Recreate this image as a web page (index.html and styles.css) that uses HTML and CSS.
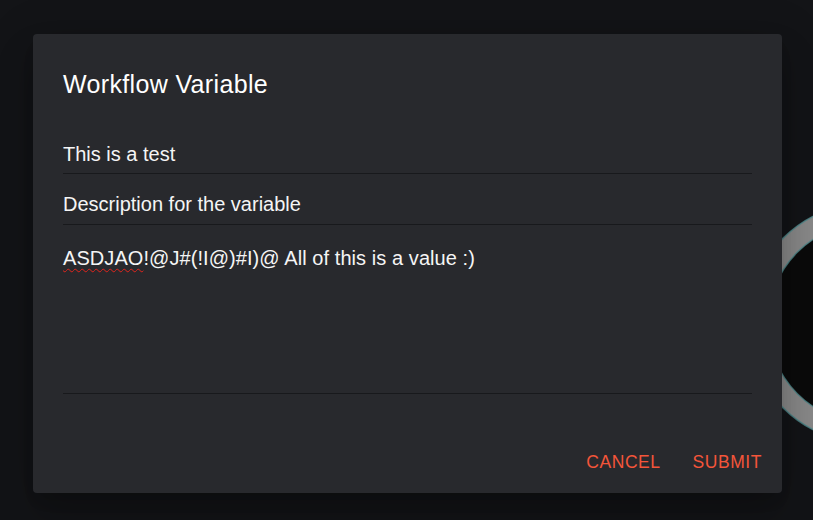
FILE: index.html
```html
<!DOCTYPE html>
<html lang="en">
<head>
<meta charset="utf-8">
<title>Workflow Variable</title>
<link rel="stylesheet" href="styles.css">
</head>
<body>
<svg class="ring" width="75" height="260" viewBox="0 0 75 260" aria-hidden="true">
  <circle cx="130" cy="130" r="110" fill="#0b0b0b" stroke="#8a8a8a" stroke-width="20"/>
  <circle cx="130" cy="130" r="120" fill="none" stroke="#4f8a8c" stroke-width="1.5" opacity="0.8"/>
  <circle cx="130" cy="130" r="100" fill="none" stroke="#4f8a8c" stroke-width="1.5" opacity="0.8"/>
</svg>
<div class="dialog" role="dialog">
  <h2 class="title">Workflow Variable</h2>
  <div class="field field-name">This is a test</div>
  <div class="field field-desc">Description for the variable</div>
  <div class="field field-value"><span class="misspelled">ASDJAO</span>!@J#(!I@)#I)@ All of this is a value :)</div>
  <div class="actions">
    <button class="btn" type="button">Cancel</button>
    <button class="btn" type="button">Submit</button>
  </div>
</div>
</body>
</html>
```

FILE: styles.css
```css
html, body {
  margin: 0;
  padding: 0;
}

body {
  width: 813px;
  height: 520px;
  overflow: hidden;
  background: #131417;
  font-family: "Liberation Sans", Arial, sans-serif;
  color: #ffffff;
  position: relative;
  box-sizing: border-box;
  padding: 34px 0 0 33px;
}

.ring {
  position: absolute;
  left: 738px;
  top: 193px;
  z-index: 0;
}

.dialog {
  position: relative;
  z-index: 1;
  width: 749px;
  height: 459px;
  box-sizing: border-box;
  padding: 0 30px;
  background: #28292d;
  border-radius: 4px;
  box-shadow: 0 11px 15px -7px rgba(0, 0, 0, 0.2), 0 24px 38px 3px rgba(0, 0, 0, 0.14), 0 9px 46px 8px rgba(0, 0, 0, 0.12);
  display: flex;
  flex-direction: column;
}

.title {
  margin: 0;
  padding-top: 35px;
  font-size: 25px;
  font-weight: 400;
  line-height: 30px;
  letter-spacing: 0.35px;
  color: #ffffff;
}

.field {
  font-size: 20px;
  line-height: 24px;
  color: #f5f5f5;
  border-bottom: 1px solid #18191c;
  white-space: nowrap;
}

.field-name {
  margin-top: 43px;
  padding-bottom: 7px;
}

.field-desc {
  margin-top: 18px;
  padding-bottom: 8px;
}

.field-value {
  margin-top: 21px;
  height: 147px;
  letter-spacing: 0.07px;
}

.misspelled {
  text-decoration: underline wavy #e0241c;
  text-decoration-thickness: 1px;
  text-underline-offset: 3px;
}

.actions {
  margin: auto -30px 0;
  padding: 0 10px 12px;
  display: flex;
  justify-content: flex-end;
  gap: 12px;
}

.btn {
  background: none;
  border: 0;
  padding: 8px 10px;
  font-family: "Liberation Sans", Arial, sans-serif;
  font-size: 17.5px;
  line-height: 22px;
  letter-spacing: 0.55px;
  text-transform: uppercase;
  color: #f4553a;
  cursor: pointer;
  border-radius: 5px;
}
```
